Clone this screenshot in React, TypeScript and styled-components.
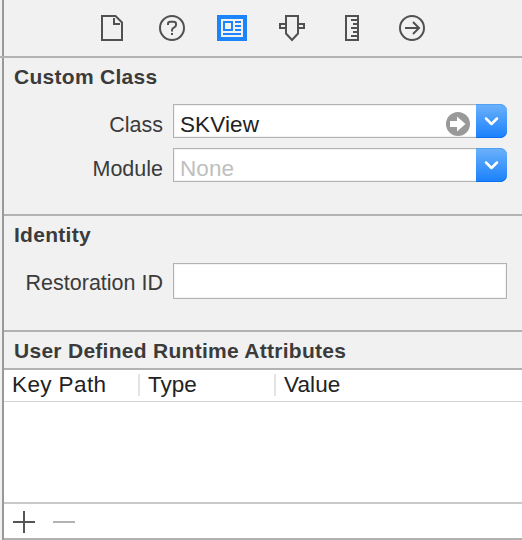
import React from "react";
import styled, { createGlobalStyle } from "styled-components";

const GlobalStyle = createGlobalStyle`
  * { box-sizing: border-box; }
  body {
    margin: 0;
    background: #f1f1f1;
    font-family: "Liberation Sans", Arial, sans-serif;
    overflow: hidden;
  }
`;

const Panel = styled.main`
  width: 522px;
  height: 540px;
  padding-left: 4px;
  background: linear-gradient(to right, #f1f1f1 2px, #999 2px, #999 4px, #f1f1f1 4px);
  color: #3b3b3b;
`;

const Toolbar = styled.nav`
  height: 58px;
  margin-left: -4px;
  padding: 13px 0 0 97px;
  display: flex;
  gap: 30px;
  border-bottom: 2px solid #b2b2b2;
`;

const ToolButton = styled.button`
  width: 30px;
  height: 30px;
  padding: 0;
  border: 0;
  background: none;
  color: #515151;
  svg { display: block; }
`;

const Section = styled.section<{ $height: number }>`
  height: ${(p) => p.$height}px;
  padding-left: 10px;
  border-bottom: 2px solid #b2b2b2;
`;

const Title = styled.h2`
  margin: 0;
  height: 36px;
  line-height: 38px;
  font-size: 21px;
  font-weight: 700;
  letter-spacing: 0.28px;
  white-space: nowrap;
`;

const Row = styled.div<{ $top: number; $height?: number }>`
  display: grid;
  grid-template-columns: 149px 334px;
  grid-template-rows: 100%;
  column-gap: 10px;
  margin-top: ${(p) => p.$top}px;
  height: ${(p) => p.$height ?? 34}px;
`;

const Label = styled.label<{ $line?: number }>`
  text-align: right;
  font-size: 21.5px;
  line-height: ${(p) => p.$line ?? 43}px;
  white-space: nowrap;
`;

const Field = styled.div`
  display: flex;
  background: #fff;
  border: 1px solid #b2b2b2;
  box-shadow: inset 0 0 0 1px #f3f3f3;
`;

const FieldText = styled.span<{ $muted?: boolean }>`
  flex: 1;
  padding-left: 6px;
  font-size: 22.5px;
  line-height: 39px;
  letter-spacing: 0.1px;
  color: ${(p) => (p.$muted ? "#bfbfbf" : "#222")};
`;

const JumpIcon = styled.svg`
  margin: 7px 6px 0 0;
`;

const DropButton = styled.button`
  width: 31px;
  height: 34px;
  padding: 0;
  border: 0;
  border-radius: 0 7px 7px 0;
  background: linear-gradient(#6cb2fa, #1a80fc);
  box-shadow: inset 0 1px #50a0f5, inset 0 -1px #0d6ff0;
  display: block;
  svg { display: block; }
`;

const DropCorner = styled.div`
  width: 31px;
  height: 34px;
  margin: -1px -1px 0 0;
  background: #f1f1f1;
`;

const HeaderRow = styled.div`
  display: grid;
  grid-template-columns: 134px 136px 1fr;
  height: 32px;
  background: #fff;
  border-bottom: 1px solid #d2d2d2;
`;

const HeaderCell = styled.div<{ $first?: boolean; $spacing: number }>`
  height: 22px;
  margin-top: 4px;
  padding-left: 8px;
  border-left: ${(p) => (p.$first ? "0" : "2px solid #e3e3e3")};
  font-size: 22.5px;
  line-height: 22px;
  letter-spacing: ${(p) => p.$spacing}px;
  color: #222;
`;

const TableBody = styled.div`
  height: 102px;
  background: #fff;
  border-bottom: 2px solid #c9c9c9;
`;

const Footer = styled.footer`
  height: 36px;
  display: flex;
  gap: 18px;
  padding: 7px 0 0 9px;
  background: #fff;
  border-bottom: 2px solid #b2b2b2;
`;

const FootButton = styled.button`
  width: 22px;
  height: 22px;
  padding: 0;
  border: 0;
  background: none;
  svg { display: block; }
`;

const Glyph = ({ children }: { children: React.ReactNode }) => (
  <svg width="30" height="30" viewBox="0 0 30 30" fill="none" stroke="currentColor" strokeWidth="2">
    {children}
  </svg>
);

const Dropdown = ({ label }: { label: string }) => (
  <DropCorner>
    <DropButton aria-label={label}>
      <svg width="31" height="34" viewBox="0 0 31 34" fill="none" stroke="#fff" strokeWidth="2.5" strokeLinecap="round" strokeLinejoin="round">
        <path d="M10 14.500l5.500 5.500 5.500-5.500" />
      </svg>
    </DropButton>
  </DropCorner>
);

export default function App() {
  return (
    <>
      <GlobalStyle />
      <Panel>
        <Toolbar>
          <ToolButton aria-label="File">
            <Glyph>
              <path d="M5 3h13.500l6.500 6.500V27H5z" />
              <path d="M17 5V11h6" />
            </Glyph>
          </ToolButton>
          <ToolButton aria-label="Help">
            <Glyph>
              <circle cx="15" cy="15" r="12" />
              <path d="M11 12V11c0-1.700 1-2.300 2.300-2.300h3.200c1.500 0 2.500.8 2.500 2.300v1c0 1.200-.7 1.700-1.700 2.300-1.500.8-2.300 1-2.300 2.700v1.500M15 20v2" />
            </Glyph>
          </ToolButton>
          <ToolButton aria-label="Identity">
            <svg width="30" height="30" viewBox="0 0 30 30" fill="none">
              <path fill="#1e84fb" d="M0 2h30v26H0z" />
              <path fill="#f1f1f1" d="M4 6h22v18H4z" />
              <path stroke="#1e84fb" strokeWidth="2" d="M7 9h8v8H7zM18 9h6M18 13h6M18 17h6M6 21h18" />
            </svg>
          </ToolButton>
          <ToolButton aria-label="Attributes">
            <Glyph>
              <path d="M9 3h12v17.500l-6 6.500-6-6.500z" />
              <path d="M9 11H3v4h6M21 11h6v4h-6" />
            </Glyph>
          </ToolButton>
          <ToolButton aria-label="Size">
            <Glyph>
              <path d="M9 3h12v24H9zM14 7h6M16 11h4M14 15h6M16 19h4M14 23h6" />
            </Glyph>
          </ToolButton>
          <ToolButton aria-label="Connections">
            <Glyph>
              <circle cx="15" cy="15" r="12" />
              <path d="M8 15h14M16 9l6 6-6 6" />
            </Glyph>
          </ToolButton>
        </Toolbar>

        <Section $height={158}>
          <Title>Custom Class</Title>
          <Row $top={10}>
            <Label>Class</Label>
            <Field>
              <FieldText>SKView</FieldText>
              <JumpIcon width="24" height="24" viewBox="0 0 24 24">
                <circle cx="12" cy="12" r="12" fill="#999" />
                <path fill="#fff" d="M4 9h7V4.500l8.500 7.500-8.500 7.500V15H4z" />
              </JumpIcon>
              <Dropdown label="Class options" />
            </Field>
          </Row>
          <Row $top={10}>
            <Label>Module</Label>
            <Field>
              <FieldText $muted>None</FieldText>
              <Dropdown label="Module options" />
            </Field>
          </Row>
        </Section>

        <Section $height={116}>
          <Title>Identity</Title>
          <Row $top={11} $height={36}>
            <Label $line={41}>Restoration ID</Label>
            <Field />
          </Row>
        </Section>

        <Section $height={38}>
          <Title>User Defined Runtime Attributes</Title>
        </Section>

        <HeaderRow>
          <HeaderCell $first $spacing={0.4}>Key Path</HeaderCell>
          <HeaderCell $spacing={0}>Type</HeaderCell>
          <HeaderCell $spacing={0.1}>Value</HeaderCell>
        </HeaderRow>
        <TableBody />
        <Footer>
          <FootButton aria-label="Add">
            <svg width="22" height="22"><path stroke="#555" strokeWidth="2" d="M0 11h22M11 0v22" /></svg>
          </FootButton>
          <FootButton aria-label="Remove">
            <svg width="22" height="22"><path stroke="#b2b2b2" strokeWidth="2" d="M0 11h22" /></svg>
          </FootButton>
        </Footer>
      </Panel>
    </>
  );
}
